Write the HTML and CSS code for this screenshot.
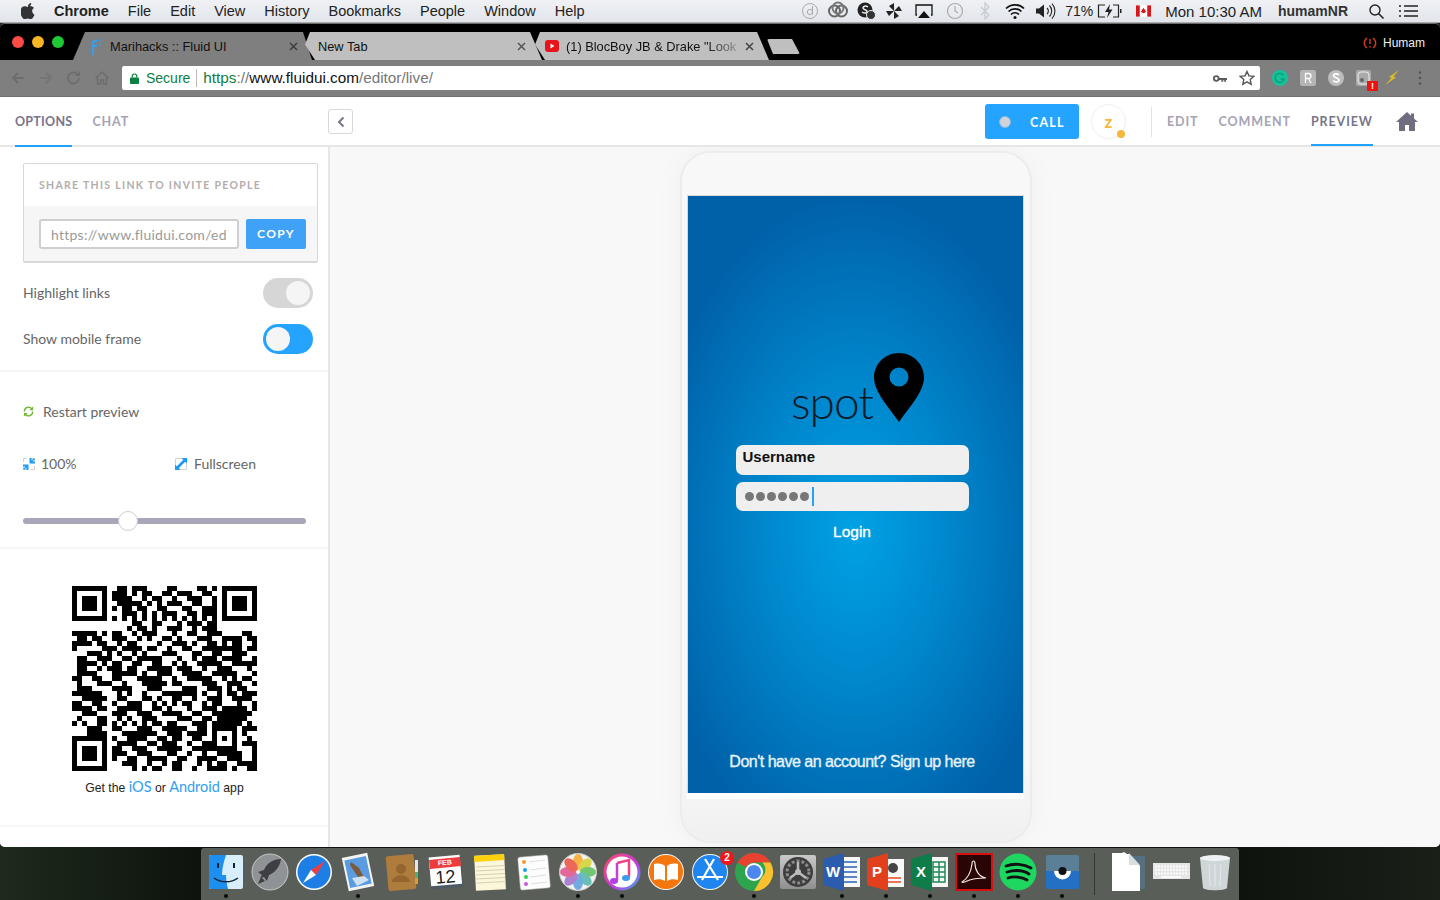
FILE: index.html
```html
<!DOCTYPE html>
<html lang="en">
<head>
<meta charset="utf-8">
<title>Marihacks :: Fluid UI</title>
<link rel="stylesheet" href="styles.css">
</head>
<body>
<header class="menubar">
  <nav class="menu-left">
    <svg class="apple" viewBox="0 0 14 16"><path d="M10.2 0c.1 1-.3 2-.9 2.700-.6.700-1.500 1.200-2.400 1.100-.1-1 .4-2 .9-2.600C8.400.500 9.400 0 10.200 0zM13.500 11.800c-.4.900-.6 1.300-1.100 2.100-.7 1.100-1.700 2.400-2.900 2.400-1.100 0-1.400-.7-2.800-.7s-1.800.7-2.900.7c-1.200 0-2.100-1.200-2.800-2.300C-.9 10.900-1.100 7.300.1 5.400.9 4.100 2.200 3.300 3.500 3.300c1.300 0 2.100.7 3.200.7 1 0 1.700-.7 3.200-.7 1.100 0 2.300.6 3.100 1.700-2.700 1.500-2.300 5.400.5 6.800z"/></svg>
    <b>Chrome</b><span>File</span><span>Edit</span><span>View</span><span>History</span><span>Bookmarks</span><span>People</span><span>Window</span><span>Help</span>
  </nav>
  <div class="menu-right">
    <svg class="st" viewBox="0 0 28 22"><circle cx="14" cy="11" r="7.500" fill="none" stroke="#aaa"/><path d="M16.500 6v8.500M16.500 12a2.600 2.600 0 1 0-5.200 0 2.600 2.600 0 0 0 5.200 0" fill="none" stroke="#aaa"/></svg>
    <svg class="st" viewBox="0 0 28 22"><circle cx="10.500" cy="11" r="5.500" fill="none" stroke="#666" stroke-width="2"/><circle cx="17.500" cy="11" r="5.500" fill="none" stroke="#666" stroke-width="2"/><circle cx="14" cy="8" r="5.500" fill="none" stroke="#777" stroke-width="2"/></svg>
    <svg class="st" viewBox="0 0 28 22"><circle cx="13" cy="10" r="7.500" fill="#222"/><path d="M16 7c-2-1.500-5-1-5 1s4 1.500 4 3.500-3 2-5 .5" fill="none" stroke="#eee" stroke-width="1.500"/><circle cx="19" cy="15" r="4.500" fill="#333" stroke="#eee"/></svg>
    <svg class="st" viewBox="0 0 28 22"><path d="M14 11V3l-5 3 5 5zM14 11h8l-3-5-5 5zM14 11v8l5-3-5-5zM14 11H6l3 5 5-5z" fill="#222"/></svg>
    <svg class="st32" viewBox="0 0 32 22"><path d="M9 15H8V5h16v10h-1" fill="none" stroke="#111" stroke-width="1.300"/><path d="M16 11l6 7H10z" fill="#111"/></svg>
    <svg class="st30" viewBox="0 0 30 22"><circle cx="15" cy="11" r="7.500" fill="none" stroke="#aaa" stroke-width="1.200"/><path d="M15 6v5l3 2" fill="none" stroke="#aaa" stroke-width="1.200"/></svg>
    <svg class="st30" viewBox="0 0 30 22"><path d="M11 7l8 8-4 4V3l4 4-8 8" fill="none" stroke="#c6c9ce" stroke-width="1.200"/></svg>
    <svg class="st30" viewBox="0 0 30 22"><path d="M6 8.500a13 13 0 0 1 18 0M8.500 11.500a9.500 9.500 0 0 1 13 0M11 14.500a5.500 5.500 0 0 1 8 0" fill="none" stroke="#111" stroke-width="1.700"/><circle cx="15" cy="17.500" r="1.500" fill="#111"/></svg>
    <svg class="st30" viewBox="0 0 30 22"><path d="M6 8.500h3l5-4v13l-5-4H6z" fill="#222"/><path d="M17 8a4 4 0 0 1 0 6M19.500 5.500a8 8 0 0 1 0 11M22 3.500a11 11 0 0 1 0 15" fill="none" stroke="#222" stroke-width="1.100"/></svg>
    <span class="pct">71%</span>
    <svg class="batt" viewBox="0 0 26 22"><path d="M9 5H2.500v12H9M17 5h5.500v12H17" fill="none" stroke="#222" stroke-width="1.200"/><path d="M14 4l-5 8h3.500l-1.500 6 5.500-8.500H13z" fill="#222"/><rect x="24" y="9" width="1.500" height="4" fill="#222"/></svg>
    <svg class="flag" viewBox="0 0 16 12"><rect width="16" height="12" fill="#fff"/><rect width="4" height="12" fill="#d8161e"/><rect x="12" width="4" height="12" fill="#d8161e"/><path d="M8 2.500l1 1.800 1-.4-.4 2.200 1.200-.2-.5 1.300L8 8.500l-2.300-1.300-.5-1.300 1.200.2-.4-2.200 1 .4z" fill="#d8161e"/></svg>
    <span class="clock">Mon 10:30 AM</span>
    <span class="who">humamNR</span>
    <svg class="search" viewBox="0 0 17 17"><circle cx="7" cy="7" r="5" fill="none" stroke="#222" stroke-width="1.400"/><path d="M10.500 10.500l5 5" stroke="#222" stroke-width="1.600"/></svg>
    <svg class="list" viewBox="0 0 19 14"><path d="M0 2h2M5 2h14M0 7h2M5 7h14M0 12h2M5 12h14" stroke="#222" stroke-width="1.700"/></svg>
  </div>
</header>

<div class="window">
  <div class="titlebar">
    <div class="lights"><i class="red"></i><i class="yellow"></i><i class="green"></i></div>
    <div class="tabs">
      <div class="tab t-active">
        <svg class="favicon" viewBox="0 0 12 17"><path d="M2 17V5q0-3 3-3h2v2H5q-1 0-1 1v2h3v2H4v8z" fill="#35a0ee"/><path d="M9 1h2v2H9zM9 5h2v2H9z" fill="none" stroke="#35a0ee" stroke-width=".5"/></svg>
        <span class="tab-title">Marihacks :: Fluid UI</span>
        <svg class="x" viewBox="0 0 9 9"><path d="M1 1l7 7M8 1L1 8" stroke="#3c3c3c" stroke-width="1.500"/></svg>
      </div>
      <div class="tab t-mid">
        <span class="tab-title">New Tab</span>
        <svg class="x" viewBox="0 0 9 9"><path d="M1 1l7 7M8 1L1 8" stroke="#555" stroke-width="1.500"/></svg>
      </div>
      <div class="tab t-last">
        <svg class="yt" viewBox="0 0 14 12"><rect width="14" height="12" rx="3" fill="#e8141c"/><path d="M5.500 3.500l4 2.500-4 2.500z" fill="#fff"/></svg>
        <span class="tab-title fade">(1) BlocBoy JB &amp; Drake "Look</span>
        <svg class="x" viewBox="0 0 9 9"><path d="M1 1l7 7M8 1L1 8" stroke="#444" stroke-width="1.500"/></svg>
      </div>
      <div class="newtab"></div>
    </div>
    <div class="profile">
      <svg class="prof-ico" viewBox="0 0 14 14"><path d="M4 2a6 6 0 0 0 0 10M10 2a6 6 0 0 1 0 10" fill="none" stroke="#d63a1e" stroke-width="1.400"/><path d="M7 3v5M7 10v1.500" stroke="#d63a1e" stroke-width="1.400"/></svg>
      <span>Humam</span>
    </div>
  </div>

  <div class="toolbar">
    <div class="nav-icons">
      <svg viewBox="0 0 16 16"><path d="M14 8H3M8 3L3 8l5 5" fill="none" stroke="#6d6d6d" stroke-width="1.800"/></svg>
      <svg viewBox="0 0 16 16"><path d="M2 8h11M8 3l5 5-5 5" fill="none" stroke="#757575" stroke-width="1.800"/></svg>
      <svg viewBox="0 0 16 16"><path d="M13 8a5.500 5.500 0 1 1-1.700-4" fill="none" stroke="#6d6d6d" stroke-width="1.800"/><path d="M14 1v5H9z" fill="#6d6d6d"/></svg>
      <svg viewBox="0 0 16 16"><path d="M1.500 8L8 2l6.500 6M3.500 7v7h3v-4h3v4h3V7" fill="none" stroke="#6d6d6d" stroke-width="1.500"/></svg>
    </div>
    <div class="omnibox">
      <svg class="lock" viewBox="0 0 10 12"><path d="M2.500 5V3.500a2.500 2.500 0 0 1 5 0V5" fill="none" stroke="#0b8043" stroke-width="1.300"/><rect y="5" width="10" height="7" rx="1" fill="#0b8043"/></svg>
      <span class="secure">Secure</span>
      <span class="url"><span class="u-green">https</span><span class="u-grey">://</span><span class="u-dark">www.fluidui.com</span><span class="u-grey">/editor/live/</span></span>
      <svg class="key" viewBox="0 0 15 9"><circle cx="3.500" cy="4.500" r="2.500" fill="none" stroke="#5c5c5c" stroke-width="2"/><path d="M6 4h9v2h-1v2h-2V6h-1v2H9V6H6z" fill="#5c5c5c"/></svg>
      <svg class="star" viewBox="0 0 16 16"><path d="M8 1.500l2 4.400 4.700.5-3.500 3.200 1 4.700L8 11.900l-4.200 2.400 1-4.700L1.300 6.400 6 5.900z" fill="none" stroke="#555" stroke-width="1.400"/></svg>
    </div>
    <div class="ext">
      <svg viewBox="0 0 18 18"><circle cx="9" cy="9" r="8" fill="#15c39a"/><path d="M12.500 6.500A4.500 4.500 0 1 0 13 10H9.500" fill="none" stroke="#0ea37f" stroke-width="1.800"/></svg>
      <svg viewBox="0 0 18 18"><rect x="1" y="1" width="16" height="16" rx="2" fill="#b5b5b5"/><path d="M6.500 14V4.500h3a2.500 2.500 0 0 1 0 5h-3M9.500 9.500L12 14" fill="none" stroke="#fff" stroke-width="1.300"/></svg>
      <svg viewBox="0 0 18 18"><circle cx="9" cy="9" r="8" fill="#bdbdbd"/><path d="M12 6c-1.500-1.500-5.500-1.500-5.500.7S12 8.500 12 11c0 2.200-4 2.500-6 .7" fill="none" stroke="#fff" stroke-width="1.700"/></svg>
      <span class="ext-badge"><svg viewBox="0 0 18 18"><rect x="1" y="1" width="15" height="16" rx="2" fill="#aaa"/><rect x="3" y="3" width="11" height="12" rx="3" fill="none" stroke="#eee"/><circle cx="7" cy="11" r="2" fill="#666"/></svg><b>!</b></span>
      <svg viewBox="0 0 18 18"><path d="M16 1L6 8l2.500 1L2 16l11-7.500-2.500-1z" fill="#d8bc28"/></svg>
      <svg viewBox="0 0 18 18"><circle cx="9" cy="3.500" r="1.300" fill="#555"/><circle cx="9" cy="9" r="1.300" fill="#555"/><circle cx="9" cy="14.500" r="1.300" fill="#555"/></svg>
    </div>
  </div>

  <div class="app">
    <div class="apphead">
      <div class="head-left">
        <span class="htab active narrow">OPTIONS</span>
        <span class="htab">CHAT</span>
      </div>
      <button class="collapse" aria-label="collapse"><svg viewBox="0 0 8 12"><path d="M6.500 1.500L2 6l4.500 4.500" fill="none" stroke="#77758a" stroke-width="2"/></svg></button>
      <div class="head-right">
        <button class="call"><i></i><span>CALL</span></button>
        <div class="avatar">z<i></i></div>
        <div class="vsep"></div>
        <span class="htab">EDIT</span>
        <span class="htab">COMMENT</span>
        <span class="htab active dark">PREVIEW</span>
        <svg class="home" viewBox="0 0 22 19"><path d="M11 0L0 10h3v9h6v-6h4v6h6v-9h3l-4-3.600V1.500h-3v2.200z" fill="#6f6d80"/></svg>
      </div>
    </div>
    <div class="appbody">
      <aside class="side">
        <section class="sec sec-a">
          <div class="share">
            <div class="share-h">SHARE THIS LINK TO INVITE PEOPLE</div>
            <div class="share-b">
              <div class="link-in">https://www.fluidui.com/ed</div>
              <button class="copy">COPY</button>
            </div>
          </div>
          <div class="opt"><span>Highlight links</span><div class="tgl off"><i></i></div></div>
          <div class="opt opt2"><span>Show mobile frame</span><div class="tgl on"><i></i></div></div>
        </section>
        <section class="sec sec-b">
          <div class="restart">
            <svg viewBox="0 0 12 12"><path d="M1.500 6A4.500 4.500 0 0 1 9.500 3M10.500 6A4.500 4.500 0 0 1 2.500 9" fill="none" stroke="#6bb52b" stroke-width="1.500"/><path d="M11 .5v4H7zM1 11.500v-4h4z" fill="#6bb52b"/></svg>
            <span>Restart preview</span>
          </div>
          <div class="zoomrow">
            <div class="zoomitem"><svg viewBox="0 0 12 12"><path d="M.5 4V.5H4M8 .5h3.500V4M.5 8v3.500H4M8 11.500h3.500V8" fill="none" stroke="#d2d2d2"/><path d="M0 6.500h5.500V12H3.500V9.500L1 12 0 11l2.500-2.500H0zM12 5.500H6.500V0h2v2.500L11 0l1 1-2.500 2.500H12z" fill="#1a9cf8"/></svg><span>100%</span></div>
            <div class="zoomitem fs"><svg viewBox="0 0 12 12"><path d="M.5 10V.5H10M2 11.500h9.500V2" fill="none" stroke="#d2d2d2"/><path d="M2 10l8-8" stroke="#1a9cf8" stroke-width="2.600"/><path d="M12 0v5.500L6.500 0zM0 12V6.500L5.500 12z" fill="#1a9cf8"/></svg><span>Fullscreen</span></div>
          </div>
          <div class="slider"><i></i></div>
        </section>
        <section class="sec sec-c">
          <svg class="qr" viewBox="0 0 37 37" shape-rendering="crispEdges"><path d="M0 0h7v7H0zM1 1v5h5V1zM30 0h7v7h-7zM31 1v5h5V1zM0 30h7v7H0zM1 31v5h5v-5z" fill-rule="evenodd"/><path d="M2 2h3v3H2zM32 2h3v3h-3zM2 32h3v3H2z"/><path class="qrm" d="M9 .5h2M12 .5h3M19 .5h2M25 .5h2M28 .5h1M8 1.500h3M12 1.500h1M14 1.500h2M18 1.500h2M21 1.500h3M26 1.500h2M8 2.500h4M14 2.500h1M16 2.500h2M20 2.500h1M23 2.500h3M28 2.500h1M9 3.500h5M15 3.500h1M17 3.500h1M19 3.500h3M24 3.500h2M28 3.500h1M8 4.500h1M10 4.500h2M13 4.500h2M17 4.500h2M22 4.500h2M26 4.500h3M10 5.500h3M14 5.500h1M16 5.500h1M18 5.500h3M23 5.500h2M26 5.500h3M8 6.500h1M10 6.500h1M12 6.500h1M14 6.500h1M16 6.500h1M18 6.500h1M20 6.500h1M22 6.500h1M24 6.500h1M26 6.500h1M28 6.500h1M12 7.500h2M16 7.500h2M21 7.500h1M23 7.500h3M27 7.500h2M11 8.500h1M13 8.500h2M16 8.500h1M19 8.500h3M24 8.500h1M26 8.500h3M0 9.500h5M6 9.500h1M8 9.500h2M12 9.500h1M14 9.500h3M20 9.500h1M23 9.500h2M27 9.500h3M34 9.500h2M1 10.500h2M4 10.500h2M8 10.500h3M13 10.500h1M15 10.500h1M18 10.500h2M21 10.500h1M25 10.500h3M30 10.500h4M35 10.500h2M0 11.500h4M5 11.500h2M9 11.500h1M11 11.500h2M17 11.500h1M20 11.500h3M24 11.500h1M27 11.500h2M30 11.500h1M32 11.500h2M36 11.500h1M0 12.500h1M6 12.500h3M10 12.500h4M15 12.500h2M19 12.500h1M22 12.500h2M26 12.500h8M35 12.500h2M3 13.500h3M7 13.500h1M9 13.500h1M12 13.500h1M14 13.500h1M18 13.500h3M24 13.500h2M28 13.500h2M32 13.500h3M1 14.500h2M5 14.500h3M10 14.500h2M13 14.500h5M21 14.500h1M24 14.500h1M26 14.500h3M30 14.500h4M36 14.500h1M1 15.500h4M6 15.500h1M8 15.500h2M12 15.500h2M16 15.500h2M20 15.500h1M22 15.500h1M25 15.500h5M32 15.500h5M1 16.500h2M5 16.500h1M7 16.500h3M11 16.500h2M15 16.500h5M21 16.500h3M26 16.500h1M29 16.500h3M35 16.500h1M1 17.500h4M8 17.500h5M14 17.500h1M17 17.500h3M22 17.500h4M28 17.500h5M36 17.500h1M0 18.500h2M4 18.500h2M8 18.500h2M13 18.500h5M20 18.500h1M23 18.500h5M30 18.500h1M32 18.500h1M34 18.500h2M1 19.500h1M5 19.500h3M10 19.500h1M14 19.500h5M20 19.500h2M26 19.500h3M31 19.500h3M36 19.500h1M1 20.500h3M8 20.500h4M15 20.500h3M22 20.500h3M27 20.500h3M31 20.500h1M33 20.500h2M0 21.500h6M9 21.500h1M11 21.500h1M14 21.500h1M18 21.500h7M26 21.500h1M29 21.500h1M31 21.500h2M34 21.500h3M2 22.500h5M9 22.500h2M14 22.500h2M17 22.500h1M20 22.500h2M24 22.500h1M27 22.500h3M32 22.500h4M0 23.500h2M4 23.500h2M8 23.500h1M11 23.500h3M16 23.500h1M18 23.500h1M20 23.500h1M22 23.500h2M26 23.500h1M28 23.500h2M33 23.500h1M36 23.500h1M0 24.500h4M5 24.500h2M9 24.500h5M16 24.500h2M19 24.500h1M23 24.500h1M26 24.500h3M30 24.500h5M36 24.500h1M2 25.500h3M8 25.500h3M13 25.500h3M18 25.500h4M24 25.500h2M28 25.500h8M1 26.500h1M5 26.500h2M9 26.500h1M11 26.500h1M14 26.500h3M21 26.500h3M26 26.500h2M29 26.500h6M0 27.500h1M2 27.500h1M5 27.500h2M8 27.500h1M10 27.500h1M12 27.500h1M14 27.500h1M16 27.500h2M19 27.500h2M24 27.500h3M28 27.500h6M35 27.500h1M3 28.500h3M8 28.500h2M13 28.500h3M18 28.500h5M25 28.500h2M28 28.500h5M34 28.500h3M3 29.500h4M10 29.500h7M19 29.500h3M23 29.500h4M28 29.500h1M32 29.500h1M34 29.500h1M8 30.500h1M11 30.500h4M17 30.500h2M20 30.500h2M24 30.500h2M28 30.500h1M30 30.500h1M32 30.500h1M35 30.500h1M9 31.500h4M15 31.500h2M18 31.500h3M23 31.500h1M26 31.500h3M32 31.500h1M34 31.500h3M8 32.500h2M12 32.500h3M17 32.500h5M24 32.500h9M36 32.500h1M8 33.500h3M13 33.500h3M19 33.500h2M23 33.500h1M26 33.500h1M29 33.500h5M36 33.500h1M8 34.500h1M11 34.500h2M15 34.500h4M21 34.500h2M25 34.500h4M31 34.500h3M36 34.500h1M10 35.500h3M15 35.500h1M18 35.500h1M20 35.500h2M25 35.500h1M27 35.500h1M29 35.500h2M33 35.500h4M12 36.500h1M14 36.500h1M16 36.500h2M20 36.500h2M24 36.500h1M27 36.500h4M32 36.500h1M35 36.500h2"/></svg>
          <p class="getapp">Get the <a>iOS</a> or <a>Android</a> app</p>
        </section>
      </aside>
      <main class="canvas">
        <div class="phone">
          <div class="screen">
            <div class="logo">
              <span class="spot">spot</span>
              <svg class="pin" viewBox="0 0 50 69"><path d="M25 0C11 0 0 11 0 24.500 0 39 16 56 25 69c9-13 25-30 25-44.500C50 11 39 0 25 0zm0 33.500a9.500 9.500 0 1 1 0-19 9.500 9.500 0 0 1 0 19z"/></svg>
            </div>
            <div class="field user">Username</div>
            <div class="field pass"><i></i><i></i><i></i><i></i><i></i><i></i><b></b></div>
            <div class="login">Login</div>
            <div class="signup">Don't have an account? Sign up here</div>
          </div>
          <div class="chin"></div>
        </div>
      </main>
    </div>
  </div>
</div>

<footer class="dock">
  <div class="slot on"><svg viewBox="0 0 40 40"><rect x="3" y="3" width="34" height="34" rx="2" fill="#d8eefb"/><path d="M5 3h15c-2 6-4 13-4 20h4c0 5 1 10 2 14H5a2 2 0 0 1-2-2V5a2 2 0 0 1 2-2z" fill="#1c8ff0"/><path d="M12 11v5M28 11v5" stroke="#123" stroke-width="2"/><path d="M8 26c7 5 17 5 24 0" fill="none" stroke="#123" stroke-width="1.500"/></svg></div>
  <div class="slot"><svg viewBox="0 0 40 40"><circle cx="20" cy="20" r="18" fill="#8f9396" stroke="#c8c8c8"/><path d="M31 7c-8 0-14 4-17 11l-6 2 4 3-2 3 4-1 3 4 2-6c7-3 11-9 12-16zM11 25l-3 7 7-3" fill="#3d3f42"/></svg></div>
  <div class="slot"><svg viewBox="0 0 40 40"><circle cx="20" cy="20" r="18" fill="#fff"/><circle cx="20" cy="20" r="16.500" fill="#1d7fe6"/><path d="M31 9L17 18l5 5z" fill="#f23c3c"/><path d="M9 31l8-13 5 5z" fill="#fff"/></svg></div>
  <div class="slot on"><svg viewBox="0 0 40 40"><rect x="7" y="3" width="26" height="34" fill="#f4f4f4" transform="rotate(-12 20 20)"/><rect x="9" y="6" width="22" height="28" fill="#5b9be0" transform="rotate(-12 20 20)"/><path d="M13 10l8 6 6 11-5 1-6-9-4-6z" fill="#7a5a3a"/><path d="M14 26l12-2 5 4-12 6z" fill="#cfe2f4"/></svg></div>
  <div class="slot"><svg viewBox="0 0 40 40"><rect x="5" y="3" width="28" height="35" rx="2" fill="#ae7c3d" transform="rotate(-5 20 20)"/><rect x="33" y="8" width="3" height="24" fill="#e5e5e5"/><path d="M33 20h3v6h-3z" fill="#47b37a"/><path d="M33 26h3v6h-3z" fill="#e69a2e"/><circle cx="19" cy="17" r="5" fill="#94652f"/><path d="M10 30c1-9 17-9 18 0z" fill="#94652f"/></svg></div>
  <div class="slot"><svg viewBox="0 0 40 40"><rect x="4" y="6" width="32" height="30" fill="#4d5a66" transform="rotate(-5 20 20)"/><rect x="4" y="4" width="31" height="29" fill="#fff" transform="rotate(-5 20 20)"/><path d="M3 8l31-3 1 9-31 3z" fill="#ee3b3b"/><text x="19" y="13" class="cal-m" transform="rotate(-5 19 13)">FEB</text><text x="20" y="31" class="cal-d" transform="rotate(-5 20 31)">12</text></svg></div>
  <div class="slot"><svg viewBox="0 0 40 40"><rect x="5" y="3" width="30" height="35" fill="#fbf6dc" transform="rotate(-3 20 20)"/><path d="M4 4l30-2 .4 6-30 2z" fill="#fdd20a"/><path d="M6 15l29-1.500M6 19l29-1.500M6 23l29-1.500M6 27l29-1.500M7 31l29-1.500" stroke="#d6d1b4"/></svg></div>
  <div class="slot"><svg viewBox="0 0 40 40"><rect x="5" y="4" width="30" height="33" rx="2" fill="#fdfdfd" stroke="#bbb" stroke-width=".5" transform="rotate(-5 20 20)"/><circle cx="10" cy="10" r="2" fill="#f79a2d"/><circle cx="11" cy="18" r="2" fill="#1c9cf0"/><circle cx="12" cy="25" r="2" fill="#2ed158"/><circle cx="12" cy="32" r="2" fill="#c85ad8"/><path d="M15 10l16-2M16 18l16-2M16 25l16-2M17 32l16-2" stroke="#ddd"/></svg></div>
  <div class="slot on"><svg viewBox="0 0 40 40"><circle cx="20" cy="20" r="18.500" fill="#f2f2f2" stroke="#ccc"/><g opacity=".85"><ellipse cx="20" cy="10" rx="5" ry="8" fill="#f9a825"/><ellipse cx="27" cy="13" rx="5" ry="8" fill="#d4d330" transform="rotate(45 27 13)"/><ellipse cx="30" cy="20" rx="8" ry="5" fill="#5cc05a"/><ellipse cx="27" cy="27" rx="5" ry="8" fill="#4fb8a8" transform="rotate(-45 27 27)"/><ellipse cx="20" cy="30" rx="5" ry="8" fill="#5aa0dc"/><ellipse cx="13" cy="27" rx="5" ry="8" fill="#a070c8" transform="rotate(45 13 27)"/><ellipse cx="10" cy="20" rx="8" ry="5" fill="#e0508c"/><ellipse cx="13" cy="13" rx="5" ry="8" fill="#ec4f3c" transform="rotate(-45 13 13)"/></g></svg></div>
  <div class="slot on"><svg viewBox="0 0 40 40"><defs><linearGradient id="it" x1="0" y1="0" x2="1" y2="1"><stop offset="0" stop-color="#fb4a6a"/><stop offset=".6" stop-color="#c03ae0"/><stop offset="1" stop-color="#3ab0f0"/></linearGradient></defs><circle cx="20" cy="20" r="17" fill="#fff" stroke="url(#it)" stroke-width="3"/><path d="M15 11l12-3v17" fill="none" stroke="#f0408a" stroke-width="2.500"/><path d="M15 11v17" stroke="#c840d0" stroke-width="2.500"/><ellipse cx="12" cy="29" rx="4" ry="3" fill="#b040e0"/><ellipse cx="24" cy="26" rx="4" ry="3" fill="#4098f0"/></svg></div>
  <div class="slot"><svg viewBox="0 0 40 40"><circle cx="20" cy="20" r="18" fill="#f4f4f4"/><circle cx="20" cy="20" r="17" fill="#f4760c"/><path d="M8 12c5-1 9 0 11 2v15c-3-2-7-2-11-1zM32 12c-5-1-9 0-11 2v15c3-2 7-2 11-1z" fill="#fff"/></svg></div>
  <div class="slot badge-slot"><svg viewBox="0 0 40 40"><circle cx="20" cy="20" r="18" fill="#f4f4f4"/><circle cx="20" cy="20" r="17" fill="#1e86ee"/><path d="M24 7L12 28M15 7l13 21M7 25h26" stroke="#fff" stroke-width="2.200" fill="none"/></svg><b class="badge">2</b></div>
  <div class="slot on"><svg viewBox="0 0 40 40"><circle cx="20" cy="20" r="19" fill="#2da44e"/><path d="M20 1a19 19 0 0 1 16.500 9.500H20a9.500 9.500 0 0 0-8.200 4.700L3.500 10.500A19 19 0 0 1 20 1z" fill="#e8412f"/><path d="M36.500 10.500A19 19 0 0 1 20 39l8.200-14.200a9.500 9.500 0 0 0-.1-14.300z" fill="#fbc02d"/><circle cx="20" cy="20" r="9" fill="#fff"/><circle cx="20" cy="20" r="7" fill="#4a88ee"/></svg></div>
  <div class="slot"><svg viewBox="0 0 40 40"><defs><linearGradient id="sp" x1="0" y1="0" x2="0" y2="1"><stop offset="0" stop-color="#c9c9c9"/><stop offset="1" stop-color="#8f8f8f"/></linearGradient></defs><rect x="2" y="3" width="36" height="34" rx="2" fill="url(#sp)"/><circle cx="20" cy="20" r="15" fill="#3d3d3d"/><circle cx="20" cy="20" r="11" fill="none" stroke="#8a8a8a" stroke-width="3" stroke-dasharray="3 2"/><circle cx="20" cy="20" r="3" fill="#bbb"/><path d="M20 20V10M20 20l-8 6M20 20l8 6" stroke="#bbb" stroke-width="2.500"/></svg></div>
  <div class="slot on"><svg viewBox="0 0 40 40"><rect x="16" y="5" width="22" height="30" fill="#f6f6f6"/><path d="M22 10h13M22 15h13M22 20h13M22 25h13M22 30h13" stroke="#5a87c8" stroke-width="2"/><path d="M1 7L22 1v38L1 33z" fill="#2c5cb0"/><text x="11" y="25" class="off-l">W</text></svg></div>
  <div class="slot on"><svg viewBox="0 0 40 40"><rect x="17" y="7" width="21" height="28" fill="#f8f8f8"/><circle cx="27" cy="16" r="5" fill="#444"/><path d="M22 26h13M22 30h13" stroke="#e34a2a" stroke-width="1.500"/><path d="M1 7L22 1v38L1 33z" fill="#e2401c"/><text x="11" y="25" class="off-l">P</text></svg></div>
  <div class="slot on"><svg viewBox="0 0 40 40"><rect x="17" y="5" width="21" height="30" fill="#f6f6f6"/><path d="M23 10h12v20H23zM23 15h12M23 20h12M23 25h12M29 10v20" fill="none" stroke="#1f8a55" stroke-width="1.500"/><path d="M1 7L22 1v38L1 33z" fill="#0f7d4a"/><text x="11" y="25" class="off-l">X</text></svg></div>
  <div class="slot on"><svg viewBox="0 0 40 40"><rect x="2" y="2" width="36" height="36" fill="#2a0505" stroke="#d81010" stroke-width="2"/><path d="M8 30c5-3 9-10 10-18 0-4 3-4 3 0 0 6 4 13 11 14-6 0-15 1-19 3-2 1-4 2-5 1z" fill="none" stroke="#f0e6e6" stroke-width="1.200"/></svg></div>
  <div class="slot on"><svg viewBox="0 0 40 40"><circle cx="20" cy="20" r="18.500" fill="#1ed760"/><path d="M8 14c8-3 18-2 25 2M9 20c7-2 16-2 22 2M10 26c6-2 14-1 19 2" fill="none" stroke="#111" stroke-width="2.800" stroke-linecap="round"/></svg></div>
  <div class="slot on"><svg viewBox="0 0 40 40"><rect x="4" y="3" width="33" height="34" rx="2" fill="#5c7f98"/><path d="M4 19h33v16a2 2 0 0 1-2 2H6a2 2 0 0 1-2-2z" fill="#2470c4"/><path d="M12 19a8.500 8.500 0 0 0 17 0z" fill="#fff"/><circle cx="20.500" cy="19" r="4" fill="#111"/></svg></div>
  <div class="dock-sep"></div>
  <div class="slot"><svg viewBox="0 0 40 40"><rect x="17" y="4" width="21" height="33" fill="#56707f"/><path d="M5 1h10l2-1 3 2 2 0 11 12v25H5z" fill="#fff"/><path d="M22 1l11 12H22z" fill="#d8dde0"/></svg></div>
  <div class="slot"><svg viewBox="0 0 40 40"><rect x="2" y="11" width="37" height="16" fill="#e6e6e6"/><path d="M4 14.500h33M4 18h33M4 21.500h33" stroke="#fafafa" stroke-width="2" stroke-dasharray="2 1"/><path d="M10 25h20" stroke="#fafafa" stroke-width="2"/></svg></div>
  <div class="slot"><svg viewBox="0 0 40 40"><path d="M5 6c3-3 27-3 30 0l-3 30c-2 3-22 3-24 0z" fill="#cfd6d8"/><ellipse cx="20" cy="6" rx="15" ry="3" fill="#eef2f3"/><path d="M14 12l1 22M20 12v22M26 12l-1 22" stroke="#e4e9ea"/></svg></div>
</footer>
</body>
</html>
```

FILE: styles.css
```css
* { box-sizing: border-box; }
html, body { margin: 0; height: 900px; overflow: hidden; }
body {
  width: 1440px;
  background: linear-gradient(90deg, #1d2a1c 0, #0e130d 14%, #0e130d 86%, #1a2018 100%);
  font-family: "Liberation Sans", Arial, sans-serif;
  display: flex;
  flex-direction: column;
}

/* menu bar */
.menubar {
  height: 23px;
  background: linear-gradient(#eff1f5, #e2e5ea);
  border-bottom: 1px solid #a9abae;
  display: flex;
  justify-content: space-between;
  align-items: center;
  padding: 0 22px 0 21px;
  font-size: 14.500px;
  color: #222;
}
.menu-left { display: flex; align-items: center; gap: 19px; }
.apple { width: 14px; height: 16px; fill: #333; }
.menu-left b { color: #222; }
.menu-right { display: flex; align-items: center; }
.st { width: 28px; height: 22px; }
.st32 { width: 32px; height: 22px; }
.st30 { width: 30px; height: 22px; }
.pct { margin-left: 5px; font-size: 14px; }
.batt { width: 26px; height: 22px; margin-left: 3px; }
.flag { width: 15px; height: 12px; margin-left: 14px; }
.clock { margin-left: 14px; font-size: 15px; }
.who { margin-left: 16px; font-size: 14px; font-weight: 700; color: #333; }
.search { width: 17px; height: 17px; margin-left: 20px; }
.list { width: 19px; height: 14px; margin-left: 14px; }

/* window chrome */
.window { height: 824px; display: flex; flex-direction: column; }
.titlebar {
  height: 37px;
  background: #000;
  border-top: 1px solid #6a6a6a;
  border-radius: 5px 5px 0 0;
  display: flex;
  align-items: flex-end;
  flex: none;
}
.lights { width: 73px; height: 100%; padding: 12px 0 0 12px; display: flex; gap: 8px; flex: none; }
.lights i { width: 12px; height: 12px; border-radius: 50%; }
.red { background: #fc4a45; }
.yellow { background: #f9b523; }
.green { background: #1ec934; }
.tabs { display: flex; align-items: flex-end; flex: 1; }
.tab {
  height: 28px;
  font-size: 12.800px;
  color: #111;
  display: flex;
  align-items: center;
  flex: none;
}
.tab-title { white-space: nowrap; }
.t-active {
  width: 239px;
  background: #7f7f7f;
  clip-path: polygon(12px 0, 230px 0, 239px 100%, 0 100%);
  padding: 0 0 0 17px;
}
.favicon { width: 12px; height: 17px; margin-right: 8px; }
.t-active .x { margin-left: 62px; }
.t-mid {
  width: 237px;
  margin-left: -7px;
  background: #bfbfbf;
  clip-path: polygon(5px 0, 225px 0, 237px 100%, 10px 100%, 0 45%);
  padding-left: 13px;
}
.t-mid .x { margin-left: 149px; }
.t-last {
  width: 234px;
  margin-left: -7px;
  background: #bfbfbf;
  clip-path: polygon(5px 0, 222px 0, 234px 100%, 10px 100%, 0 45%);
  padding-left: 10px;
}
.yt { width: 14px; height: 12px; margin-right: 7px; flex: none; }
.fade {
  width: 171px;
  overflow: hidden;
  -webkit-mask-image: linear-gradient(90deg, #000 82%, rgba(0,0,0,.25) 100%);
  mask-image: linear-gradient(90deg, #000 82%, rgba(0,0,0,.25) 100%);
}
.t-last .x { margin-left: 8px; }
.x { width: 9px; height: 9px; flex: none; }
.newtab {
  width: 33px;
  height: 15px;
  background: #bfbfbf;
  margin: 0 0 6px -2px;
  clip-path: polygon(0 0, 25px 0, 33px 100%, 6px 100%);
  border-radius: 2px;
}
.profile {
  align-self: center;
  display: flex;
  align-items: center;
  gap: 6px;
  color: #eee;
  font-size: 12px;
  padding: 2px 15px 0 0;
}
.prof-ico { width: 14px; height: 14px; }

.toolbar {
  height: 37px;
  background: #7f7f7f;
  border-bottom: 1px solid #6f6f6f;
  display: flex;
  align-items: flex-start;
  padding: 6px 0 0 10px;
  flex: none;
}
.nav-icons { width: 112px; display: flex; gap: 12px; padding-top: 4px; flex: none; }
.nav-icons svg { width: 16px; height: 16px; }
.omnibox {
  width: 1138px;
  height: 24px;
  background: #fff;
  border-radius: 2px;
  display: flex;
  align-items: center;
  padding: 0 5px 0 8px;
  font-size: 14px;
  flex: none;
}
.lock { width: 9px; height: 11px; margin-right: 7px; }
.secure { color: #0b8043; padding-right: 6px; border-right: 1px solid #bbb; margin-right: 6px; line-height: 18px; }
.u-green { color: #0b8043; }
.u-grey { color: #777; }
.u-dark { color: #111; }
.url { flex: 1; font-size: 15.300px; }
.key { width: 14px; height: 9px; margin-right: 12px; }
.star { width: 16px; height: 16px; }
.ext { display: flex; gap: 10px; margin-left: 11px; padding-top: 3px; }
.ext svg { width: 18px; height: 18px; display: block; }
.ext-badge { position: relative; display: block; width: 18px; height: 18px; }
.ext-badge b {
  position: absolute;
  right: -5px;
  bottom: -4px;
  width: 11px;
  height: 10px;
  background: #f01010;
  color: #fff;
  font-size: 9px;
  line-height: 10px;
  text-align: center;
}

/* app */
.app {
  flex: 1;
  background: #fff;
  border-radius: 0 0 5px 5px;
  overflow: hidden;
  display: flex;
  flex-direction: column;
  font-family: Lato, sans-serif;
}
.apphead {
  height: 50px;
  border-bottom: 2px solid #e6e6e6;
  display: flex;
  align-items: flex-start;
  flex: none;
}
.head-left { width: 328px; display: flex; gap: 20px; padding-left: 15px; height: 50px; flex: none; }
.htab {
  height: 50px;
  line-height: 50px;
  font-size: 12.500px;
  font-weight: 700;
  letter-spacing: .9px;
  color: #a5a3b4;
  display: block;
}
.htab.active { color: #77758a; border-bottom: 2px solid #1ea4ff; }
.htab.narrow { letter-spacing: .25px; }
.collapse {
  width: 25px;
  height: 25px;
  margin-top: 12px;
  background: #fff;
  border: 1px solid #d8d8d8;
  border-radius: 3px;
  padding: 0;
  display: flex;
  align-items: center;
  justify-content: center;
  flex: none;
}
.collapse svg { width: 8px; height: 12px; }
.head-right { flex: 1; display: flex; align-items: flex-start; gap: 20px; padding-left: 632px; height: 50px; }
.head-right .htab.dark { height: 49px; line-height: 49px; }
.call {
  width: 94px;
  height: 35px;
  margin: 7px -8px 0 0;
  background: #24a4ff;
  border: 0;
  border-radius: 3px;
  color: #fff;
  font-family: Lato, sans-serif;
  font-size: 12.500px;
  font-weight: 700;
  letter-spacing: 1.200px;
  display: flex;
  align-items: center;
  padding: 1px 0 0 14px;
  flex: none;
}
.call i { width: 12px; height: 12px; border-radius: 50%; background: #d0d3d8; border: 1px solid #8db8dc; margin-right: 19px; }
.avatar {
  width: 35px;
  height: 35px;
  margin: 7px 5px 0 0;
  border: 1px solid #eee;
  border-radius: 50%;
  color: #f6b73c;
  font-size: 17px;
  font-weight: 700;
  line-height: 33px;
  text-align: center;
  position: relative;
  flex: none;
}
.avatar i {
  position: absolute;
  right: 0;
  bottom: 0;
  width: 8px;
  height: 8px;
  border-radius: 50%;
  background: #f6b73c;
}
.vsep { width: 1px; height: 30px; margin: 10px -5px 0 0; background: #e2e2e2; flex: none; }
.home { width: 22px; height: 19px; margin: 15px 0 0 3px; flex: none; }

.appbody { flex: 1; display: flex; min-height: 0; }
.side {
  width: 330px;
  border-right: 2px solid #e6e6e6;
  background: #fff;
  flex: none;
  display: flex;
  flex-direction: column;
}
.sec { border-bottom: 2px solid #f5f5f5; flex: none; }
.sec-a { height: 225px; padding: 16px 15px 0 23px; }
.share {
  width: 295px;
  height: 100px;
  border: 1px solid #d8d8d8;
  border-bottom-width: 2px;
  border-radius: 2px;
}
.share-h {
  height: 42px;
  padding-left: 15px;
  font-size: 10.500px;
  font-weight: 700;
  letter-spacing: 1.300px;
  line-height: 42px;
  color: #b3adad;
}
.share-b {
  height: 55px;
  background: #f6f6f6;
  display: flex;
  gap: 7px;
  padding: 13px 0 0 15px;
}
.link-in {
  width: 200px;
  height: 30px;
  background: #fff;
  border: 2px solid #cfcfcf;
  border-radius: 3px;
  padding-left: 10px;
  font-size: 14px;
  line-height: 27px;
  letter-spacing: .250px;
  color: #9a9a9a;
  white-space: nowrap;
  overflow: hidden;
}
.copy {
  width: 60px;
  height: 30px;
  background: #3fa2f7;
  border: 0;
  border-radius: 2px;
  color: #fff;
  font-family: Lato, sans-serif;
  font-size: 12px;
  font-weight: 700;
  letter-spacing: 1.400px;
  padding: 0 0 2px;
}
.opt {
  height: 30px;
  margin-top: 15px;
  display: flex;
  justify-content: space-between;
  align-items: center;
  font-size: 14px;
  color: #666;
}
.opt span { margin-bottom: 2px; }
.opt2 { margin-top: 16px; }
.tgl { width: 50px; height: 30px; border-radius: 15px; padding: 3px; display: flex; }
.tgl i { width: 24px; height: 24px; border-radius: 50%; background: #f5f5f5; }
.tgl.off { background: #d6d6d6; justify-content: flex-end; }
.tgl.on { background: #24a4ff; }

.sec-b { height: 177px; padding: 31px 23px 0; font-size: 14px; color: #666; }
.restart { display: flex; align-items: center; gap: 9px; height: 17px; }
.restart svg { width: 11px; height: 11px; }
.zoomrow { display: flex; margin-top: 35px; height: 17px; }
.zoomitem { display: flex; align-items: center; gap: 6px; width: 152px; flex: none; }
.zoomitem svg { width: 12px; height: 12px; }
.fs { gap: 7px; }
.slider { width: 283px; height: 6px; margin-top: 46px; border-radius: 3px; background: #a8a6b8; position: relative; }
.slider i {
  position: absolute;
  left: 95px;
  top: -7px;
  width: 20px;
  height: 20px;
  border-radius: 50%;
  background: #fff;
  border: 1px solid #cfcfcf;
}
.sec-c { height: 278px; padding: 37px 0 0; text-align: center; }
.qr { width: 185px; height: 185px; display: block; margin: 0 0 0 72px; }
.qrm { fill: none; stroke: #000; stroke-width: 1; }
.getapp { margin: 8px 0 0; padding-left: 1px; font-family: "Liberation Sans", Arial, sans-serif; font-size: 12.200px; line-height: 16px; color: #222; }
.getapp a { color: #2ea0f0; font-size: 14.500px; font-family: Lato, sans-serif; }

.canvas { flex: 1; background: #f8f8f8; padding: 4px 0 0 350px; overflow: hidden; }
.phone {
  width: 352px;
  height: 692px;
  background: linear-gradient(#f8f8f8 88%, #f0f0f0);
  border: 2px solid #ececec;
  border-radius: 30px;
  padding: 42px 5px 0;
  box-shadow: 0 0 30px rgba(0,0,0,.04);
}
.screen {
  width: 337px;
  height: 598px;
  border: 1px solid #d9d9d9;
  border-width: 1px 1px 0;
  background: radial-gradient(ellipse 210px 340px at 50% 56%, #00a2e4 0, #0086cc 45%, #0060a8 100%);
  display: flex;
  flex-direction: column;
  align-items: center;
  padding: 157px 7px 0 0;
  color: #fff;
}
.chin { width: 337px; height: 6px; background: #fff; }
.logo { display: flex; align-items: flex-end; height: 69px; margin-left: 11px; }
.spot { font-family: Lato, sans-serif; font-weight: 300; font-size: 46px; line-height: 40px; letter-spacing: -1px; color: #0b1a28; }
.pin { width: 50px; height: 69px; flex: none; margin-left: 1px; }
.field {
  width: 233px;
  background: #efefef;
  border-radius: 7px;
  color: #111;
}
.user { height: 30px; margin-top: 23px; padding-left: 7px; font: 700 15px/24px "Liberation Sans", Arial, sans-serif; }
.pass { height: 29px; margin-top: 7px; padding-left: 9px; display: flex; align-items: center; gap: 2px; }
.pass i { width: 9px; height: 9px; border-radius: 50%; background: #777; }
.pass b { width: 2px; height: 19px; margin-left: 1px; background: #1ea4ff; }
.login { margin-top: 12px; font: 400 15.500px/18px "Liberation Sans", Arial, sans-serif; -webkit-text-stroke: .35px #fff; }
.signup { margin-top: auto; margin-bottom: 22px; font: 400 16px/18px "Liberation Sans", Arial, sans-serif; letter-spacing: -.5px; -webkit-text-stroke: .35px #e8f2fa; color: #e8f2fa; white-space: nowrap; }

/* dock */
.dock {
  width: 1038px;
  height: 52px;
  margin: 1px 0 0 201px;
  background: #5a5e58;
  border-radius: 3px 3px 0 0;
  padding: 0 3px;
  display: flex;
  flex: none;
}
.slot { width: 44px; height: 52px; padding: 4px 2px 0; position: relative; flex: none; }
.slot svg { width: 40px; height: 40px; display: block; }
.slot.on::after {
  content: "";
  position: absolute;
  left: 20px;
  bottom: 2px;
  width: 4px;
  height: 4px;
  border-radius: 50%;
  background: #0a0a0a;
}
.dock-sep { width: 1px; height: 42px; margin: 5px 10px 0; background: #333; flex: none; }
.badge {
  position: absolute;
  right: -2px;
  top: 3px;
  width: 14px;
  height: 14px;
  border-radius: 50%;
  background: #f01818;
  color: #fff;
  font-size: 10px;
  line-height: 14px;
  text-align: center;
}
.cal-m { font: 700 7px "Liberation Sans", Arial, sans-serif; fill: #fff; text-anchor: middle; }
.cal-d { font: 400 18px "Liberation Sans", Arial, sans-serif; fill: #222; text-anchor: middle; }
.off-l { font: 700 15px "Liberation Sans", Arial, sans-serif; fill: #fff; text-anchor: middle; }
```
